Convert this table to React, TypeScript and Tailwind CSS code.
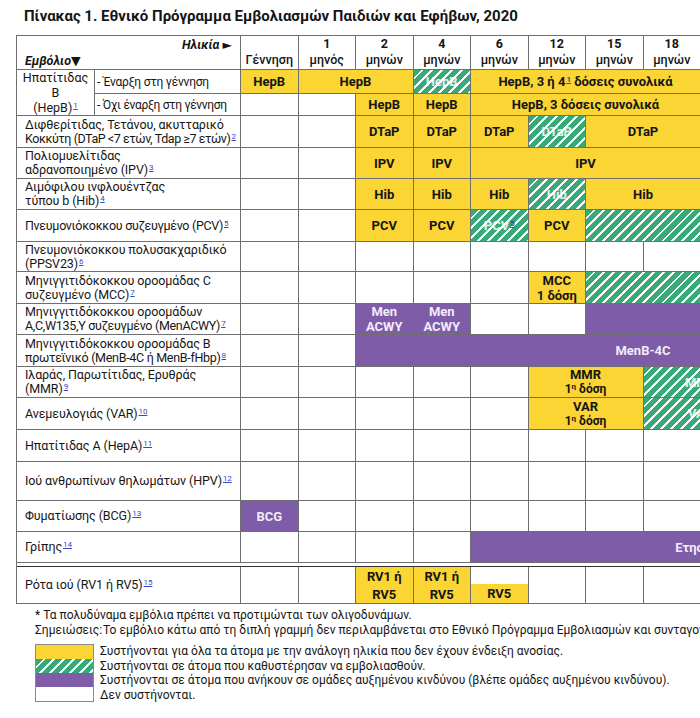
import React from 'react'

type K = 'w' | 'y' | 'g' | 'p'

const SPAN: Record<number, string> = {
  1: 'col-span-1',
  2: 'col-span-2',
  4: 'col-span-4',
  7: 'col-span-7',
  8: 'col-span-8',
  10: 'col-span-10',
  15: 'col-span-15',
}

const KIND: Record<K, string> = {
  w: 'bg-white',
  y: 'bg-[#fbd533] text-[#151515] font-bold',
  g: 'bg-[image:repeating-linear-gradient(135deg,#3aa97a_0px,#3aa97a_5px,#ffffff_5px,#ffffff_7px)] text-white/85 font-bold',
  p: 'bg-[#7e5ca7] text-[#f1ecf7] font-bold',
}

const HATCH = 'bg-[image:repeating-linear-gradient(135deg,#3aa97a_0px,#3aa97a_5px,#ffffff_5px,#ffffff_7px)]'

function C({ k = 'w', span = 1, children, className = '' }: { k?: K; span?: number; children?: React.ReactNode; className?: string }) {
  return (
    <div className={`${SPAN[span]} ${KIND[k]} border-r border-b border-[#6f6f6f] flex flex-col items-center justify-center text-center text-[13px] leading-[15px] whitespace-nowrap ${className}`}>
      {children}
    </div>
  )
}

function blanks(n: number) {
  return Array.from({ length: n }, (_, i) => <C key={'b' + i} />)
}

function L({ children }: { children: React.ReactNode }) {
  return (
    <div className="col-span-2 border-r border-b border-[#6f6f6f] flex items-center pl-[8px] text-[12.5px] leading-[14px] tracking-[-0.1px] text-[#161616] whitespace-nowrap">
      <div>{children}</div>
    </div>
  )
}

function F({ n }: { n: string }) {
  return <sup className="text-[8px] text-[#3447c4] underline ml-px">{n}</sup>
}

function Age({ n, w }: { n?: string; w: string }) {
  return (
    <div className="border-r border-b border-[#6f6f6f] flex flex-col items-center justify-end pb-[1px] text-[12.5px] leading-[16px] text-[#151515]">
      {n ? <span className="font-bold">{n}</span> : null}
      <span className="font-medium">{w}</span>
    </div>
  )
}

export default function App() {
  return (
    <div className="w-[700px] h-[718px] overflow-hidden bg-white font-['Roboto','DejaVu_Sans',sans-serif] text-[#151515]">
      <div className="h-[35px] pl-[24px] pt-[6px] text-[15px] leading-[20px] font-bold">
        Πίνακας 1. Εθνικό Πρόγραμμα Εμβολιασμών Παιδιών και Εφήβων, 2020
      </div>

      <div className="ml-[16px] w-max grid grid-cols-[78px_146px_repeat(13,57.5px)] grid-rows-[34px_24px_22px_32px_31px_31px_32px_30px_32px_31px_32px_31px_32px_32px_39px_31px_31px_4px_37px] border-l border-t border-[#6f6f6f]">
        {/* header */}
        <div className="col-span-2 border-r border-b border-[#6f6f6f] flex flex-col justify-between pt-[1px] pb-[3px] px-[8px] text-[12.5px] leading-[16px] font-bold italic">
          <div className="text-right">Ηλικία ►</div>
          <div>Εμβόλιο▼</div>
        </div>
        <Age w="Γέννηση" />
        <Age n="1" w="μηνός" />
        <Age n="2" w="μηνών" />
        <Age n="4" w="μηνών" />
        <Age n="6" w="μηνών" />
        <Age n="12" w="μηνών" />
        <Age n="15" w="μηνών" />
        <Age n="18" w="μηνών" />
        <Age n="19-23" w="μηνών" />
        <Age n="2-3" w="ετών" />
        <Age n="4-6" w="ετών" />
        <Age n="7-10" w="ετών" />
        <Age n="11-12" w="ετών" />

        {/* HepB */}
        <div className="row-span-2 border-r border-b border-[#6f6f6f] flex flex-col items-center justify-center text-[12.5px] leading-[15px]">
          <div>Ηπατίτιδας</div>
          <div>Β</div>
          <div>(HepB)<F n="1" /></div>
        </div>
        <div className="border-r border-b border-[#6f6f6f] flex items-center pl-[2px] text-[12px] tracking-[-0.2px] whitespace-nowrap">- Έναρξη στη γέννηση</div>
        <C k="y">HepB</C>
        <C k="y" span={2}>HepB</C>
        <C k="g">HepB</C>
        <C k="y" span={4}><div>HepB, 3 ή 4<F n="1" /> δόσεις συνολικά</div></C>
        {blanks(5)}

        <div className="border-r border-b border-[#6f6f6f] flex items-center pl-[2px] text-[12px] tracking-[-0.3px] whitespace-nowrap">- Όχι έναρξη στη γέννηση</div>
        {blanks(2)}
        <C k="y">HepB</C>
        <C k="y">HepB</C>
        <C k="y" span={4}>HepB, 3 δόσεις συνολικά</C>
        {blanks(5)}

        {/* DTaP */}
        <L>Διφθερίτιδας, Τετάνου, ακυτταρικό<br /><span className="tracking-[-0.45px]">Κοκκύτη (DTaP &lt;7 ετών, Tdap ≥7 ετών)</span><F n="2" /></L>
        {blanks(2)}
        <C k="y">DTaP</C>
        <C k="y">DTaP</C>
        <C k="y">DTaP</C>
        <C k="g">DTaP</C>
        <C k="y" span={2}>DTaP</C>
        {blanks(5)}

        {/* IPV */}
        <L>Πολιομυελίτιδας<br />αδρανοποιημένο (IPV)<F n="3" /></L>
        {blanks(2)}
        <C k="y">IPV</C>
        <C k="y">IPV</C>
        <C k="y" span={4}>IPV</C>
        {blanks(5)}

        {/* Hib */}
        <L>Αιμόφιλου ινφλουέντζας<br />τύπου b (Hib)<F n="4" /></L>
        {blanks(2)}
        <C k="y">Hib</C>
        <C k="y">Hib</C>
        <C k="y">Hib</C>
        <C k="g">Hib</C>
        <C k="y" span={2}>Hib</C>
        {blanks(5)}

        {/* PCV */}
        <L><span className="tracking-[-0.3px]">Πνευμονιόκοκκου συζευγμένο (PCV)</span><F n="5" /></L>
        {blanks(2)}
        <C k="y">PCV</C>
        <C k="y">PCV</C>
        <C k="g"><div>PCV<F n="5" /></div></C>
        <C k="y">PCV</C>
        <C k="g" span={7} />

        {/* PPSV23 */}
        <L>Πνευμονιόκοκκου πολυσακχαριδικό<br />(PPSV23)<F n="6" /></L>
        {blanks(13)}

        {/* MCC */}
        <L>Μηνιγγιτιδόκοκκου οροομάδας C<br />συζευγμένο (MCC)<F n="7" /></L>
        {blanks(5)}
        <C k="y"><div>MCC</div><div>1 δόση</div></C>
        <C k="g" span={7} />

        {/* MenACWY */}
        <L>Μηνιγγιτιδόκοκκου οροομάδων<br /><span className="tracking-[-0.3px]">A,C,W135,Y συζευγμένο (MenACWY)</span><F n="7" /></L>
        {blanks(2)}
        <C k="p" className="text-[12.5px]"><div>Men</div><div>ACWY</div></C>
        <C k="p" className="text-[12.5px]"><div>Men</div><div>ACWY</div></C>
        {blanks(2)}
        <C k="p" span={7} />

        {/* MenB */}
        <L>Μηνιγγιτιδόκοκκου οροομάδας Β<br /><span className="tracking-[-0.3px]">πρωτεϊνικό (MenB-4C ή MenB-fHbp)</span><F n="8" /></L>
        {blanks(2)}
        <C k="p" span={10} className="text-[12.5px]">MenB-4C</C>
        {blanks(1)}

        {/* MMR */}
        <L>Ιλαράς, Παρωτίτιδας, Ερυθράς<br />(MMR)<F n="9" /></L>
        {blanks(5)}
        <C k="y" span={2}><div>MMR</div><div className="text-[12px]">1<sup className="text-[8px]">η</sup> δόση</div></C>
        <C k="g" span={2}>MMR</C>
        {blanks(4)}

        {/* VAR */}
        <L>Ανεμευλογιάς (VAR)<F n="10" /></L>
        {blanks(5)}
        <C k="y" span={2}><div>VAR</div><div className="text-[12px]">1<sup className="text-[8px]">η</sup> δόση</div></C>
        <C k="g" span={2}>VAR</C>
        {blanks(4)}

        {/* HepA */}
        <L>Ηπατίτιδας Α (HepA)<F n="11" /></L>
        {blanks(13)}

        {/* HPV */}
        <L>Ιού ανθρωπίνων θηλωμάτων (HPV)<F n="12" /></L>
        {blanks(13)}

        {/* BCG */}
        <L>Φυματίωσης (BCG)<F n="13" /></L>
        <C k="p" className="text-[11px]">BCG</C>
        {blanks(12)}

        {/* Flu */}
        <L>Γρίπης<F n="14" /></L>
        {blanks(4)}
        <C k="p" span={8} className="text-[12.5px]">Ετησίως</C>
        {blanks(1)}

        {/* double line */}
        <div className="col-span-15 border-b border-r border-[#333] bg-white" />

        {/* RV */}
        <L>Ρότα ιού (RV1 ή RV5)<F n="15" /></L>
        {blanks(2)}
        <C k="y"><div>RV1 ή</div><div className="mt-[3px]">RV5</div></C>
        <C k="y"><div>RV1 ή</div><div className="mt-[3px]">RV5</div></C>
        <div className="border-r border-b border-[#6f6f6f] flex flex-col">
          <div className="flex-1 bg-white" />
          <div className="h-[19px] bg-[#fbd533] font-bold text-[13px] flex items-center justify-center">RV5</div>
        </div>
        {blanks(8)}
      </div>

      <div className="pl-[35px] pt-[4px] text-[12px] leading-[15px] text-[#161616]">
        <div>* Τα πολυδύναμα εμβόλια πρέπει να προτιμώνται των ολιγοδυνάμων.</div>
        <div className="flex whitespace-nowrap">
          <span className="w-[68px] shrink-0">Σημειώσεις:</span>
          <span>Το εμβόλιο κάτω από τη διπλή γραμμή δεν περιλαμβάνεται στο Εθνικό Πρόγραμμα Εμβολιασμών και συνταγογραφείται</span>
        </div>
        <div className="mt-[6px] flex gap-[6px]">
          <div className="w-[59px] shrink-0 border border-[#8a8a8a] flex flex-col">
            <div className="h-[14px] bg-[#fbd533]" />
            <div className={`h-[14px] ${HATCH}`} />
            <div className="h-[14px] bg-[#7e5ca7]" />
            <div className="h-[14px] bg-white" />
          </div>
          <div className="flex flex-col leading-[14.5px] whitespace-nowrap">
            <div>Συστήνονται για όλα τα άτομα με την ανάλογη ηλικία που δεν έχουν ένδειξη ανοσίας.</div>
            <div>Συστήνονται σε άτομα που καθυστέρησαν να εμβολιασθούν.</div>
            <div>Συστήνονται σε άτομα που ανήκουν σε ομάδες αυξημένου κινδύνου (βλέπε ομάδες αυξημένου κινδύνου).</div>
            <div>Δεν συστήνονται.</div>
          </div>
        </div>
      </div>
    </div>
  )
}
